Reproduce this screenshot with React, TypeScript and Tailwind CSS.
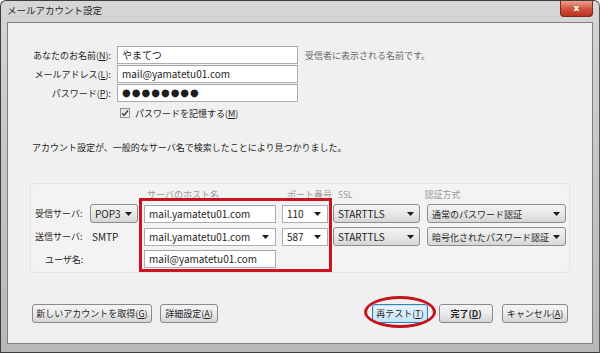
import React from 'react'

const JP = "font-['Noto_Sans_CJK_JP',sans-serif]"

function Arrow() {
  return (
    <svg width="7" height="4" viewBox="0 0 7 4" className="shrink-0">
      <path d="M0 0 L7 0 L3.5 4 Z" fill="#1b1b1b" />
    </svg>
  )
}

function TextBox({ w, children }: { w: string; children?: React.ReactNode }) {
  return (
    <div
      className={`${w} h-[18px] bg-white border border-[#abadb3] border-t-[#a0a2a8] flex items-center px-[4px] text-[10px] text-[#1e1e1e] leading-none`}
    >
      {children}
    </div>
  )
}

function Select({ w, children }: { w: string; children: React.ReactNode }) {
  return (
    <div
      className={`${w} h-[19px] rounded-[3px] border border-[#8d8d8d] bg-gradient-to-b from-[#f4f4f4] via-[#e8e8e8] to-[#d6d6d6] flex items-center justify-between pl-[4px] pr-[5px] text-[10px] text-[#1e1e1e] leading-none`}
    >
      <span className="whitespace-nowrap">{children}</span>
      <Arrow />
    </div>
  )
}

function Combo({ w, children }: { w: string; children: React.ReactNode }) {
  return (
    <div
      className={`${w} h-[18px] bg-white border border-[#abadb3] flex items-center justify-between pl-[4px] pr-[6px] text-[10px] text-[#1e1e1e] leading-none`}
    >
      <span className="whitespace-nowrap">{children}</span>
      <Arrow />
    </div>
  )
}

function Btn({
  w,
  children,
  bold,
  focus,
}: {
  w: string
  children: React.ReactNode
  bold?: boolean
  focus?: boolean
}) {
  return (
    <div
      className={`${w} h-[19px] rounded-[3px] border flex items-center justify-center text-[9px] leading-none text-[#1e1e1e] whitespace-nowrap ${
        focus
          ? 'border-[#3c7fb1] bg-gradient-to-b from-[#eaf6fd] to-[#c4e5f6] shadow-[inset_0_0_0_1px_#bfe3f7]'
          : 'border-[#8a8a8a] bg-gradient-to-b from-[#f4f4f4] via-[#ebebeb] to-[#d4d4d4]'
      } ${bold ? 'font-bold' : ''}`}
    >
      {children}
    </div>
  )
}

export default function App() {
  return (
    <div className={`w-[600px] h-[353px] ${JP} bg-white`}>
      <div className="w-[600px] h-[353px] rounded-t-[6px] border border-[#3d3d3d] border-r-[#5a5a5a] bg-gradient-to-b from-[#d6d6d6] via-[#c4c4c4] to-[#b8b8b8] flex flex-col">
        {/* title bar */}
        <div className="h-[21px] flex items-start justify-between">
          <span className="ml-[6px] mt-[5px] text-[9.5px] leading-none text-[#2a2a2a]">
            メールアカウント設定
          </span>
          <div className="mr-[6px] w-[33px] h-[16px] rounded-b-[4px] border border-t-0 border-[#7c2a1f] bg-gradient-to-b from-[#e9a08e] via-[#d2563f] to-[#b9301f] flex items-center justify-center text-white text-[9px] font-bold leading-none font-['DejaVu_Sans',sans-serif]">
            x
          </div>
        </div>

        {/* client area */}
        <div className="mx-[6px] h-[322px] border border-[#7f7f7f] bg-[#f0f0f0] flex flex-col">
          <div className="mt-[23px] flex flex-col gap-[1px]">
            <div className="flex items-center h-[18px]">
              <span className="w-[103px] text-right text-[9px] leading-none text-[#1e1e1e]">
                あなたのお名前(<u>N</u>):
              </span>
              <div className="ml-[6px]">
                <TextBox w="w-[181px]">やまてつ</TextBox>
              </div>
              <span className="ml-[7px] text-[9px] leading-none text-[#6a6a6a]">
                受信者に表示される名前です。
              </span>
            </div>
            <div className="flex items-center h-[18px]">
              <span className="w-[103px] text-right text-[9px] leading-none text-[#1e1e1e]">
                メールアドレス(<u>L</u>):
              </span>
              <div className="ml-[6px]">
                <TextBox w="w-[181px]">mail@yamatetu01.com</TextBox>
              </div>
            </div>
            <div className="flex items-center h-[18px]">
              <span className="w-[103px] text-right text-[9px] leading-none text-[#1e1e1e]">
                パスワード(<u>P</u>):
              </span>
              <div className="ml-[6px]">
                <TextBox w="w-[181px]">
                  <span className="text-[10px] tracking-[1px] font-['DejaVu_Sans',sans-serif]">
                    ●●●●●●●●
                  </span>
                </TextBox>
              </div>
            </div>
          </div>

          <div className="mt-[4px] h-[14px] flex items-center pl-[112px]">
            <div className="w-[10px] h-[10px] border border-[#8f8f8f] bg-gradient-to-b from-[#e4e4e4] to-[#f8f8f8] flex items-center justify-center">
              <svg width="8" height="8" viewBox="0 0 8 8">
                <path d="M1 4.2 L3 6.3 L7 1.5" stroke="#3c4a60" strokeWidth="1.5" fill="none" />
              </svg>
            </div>
            <span className="ml-[5px] text-[9px] leading-none text-[#1e1e1e]">
              パスワードを記憶する(<u>M</u>)
            </span>
          </div>

          <div className="mt-[20px] h-[14px] flex items-center pl-[24px] text-[9px] leading-none text-[#1e1e1e]">
            アカウント設定が、一般的なサーバ名で検索したことにより見つかりました。
          </div>

          {/* server group */}
          <div className="relative mt-[29px] ml-[22px] w-[540px] h-[90px] rounded-[3px] border border-[#e2e2e2] bg-[#f3f3f3] flex flex-col">
            <div className="h-[14px] mt-[3px] flex items-center text-[9px] leading-none text-[#9a9a9a]">
              <span className="ml-[116px]">サーバのホスト名</span>
              <span className="ml-[68px]">ポート番号</span>
              <span className="ml-[6px] font-['Noto_Sans',sans-serif]">SSL</span>
              <span className="ml-[72px]">認証方式</span>
            </div>
            <div className="mt-[3px] flex items-center h-[19px]">
              <span className="w-[59px] pl-[4px] text-[9px] leading-none text-[#1e1e1e]">受信サーバ:</span>
              <Select w="w-[48px]">POP3</Select>
              <div className="ml-[6px]">
                <TextBox w="w-[132px]">mail.yamatetu01.com</TextBox>
              </div>
              <div className="ml-[6px]">
                <Combo w="w-[46px]">110</Combo>
              </div>
              <div className="ml-[5px]">
                <Select w="w-[87px]">STARTTLS</Select>
              </div>
              <div className="ml-[7px]">
                <Select w="w-[139px]">
                  <span className="text-[9px]">通常のパスワード認証</span>
                </Select>
              </div>
            </div>
            <div className="mt-[4px] flex items-center h-[19px]">
              <span className="w-[61px] pl-[4px] text-[9px] leading-none text-[#1e1e1e]">送信サーバ:</span>
              <span className="w-[52px] text-[10px] leading-none text-[#1e1e1e]">SMTP</span>
              <Combo w="w-[132px]">mail.yamatetu01.com</Combo>
              <div className="ml-[6px]">
                <Combo w="w-[46px]">587</Combo>
              </div>
              <div className="ml-[5px]">
                <Select w="w-[87px]">STARTTLS</Select>
              </div>
              <div className="ml-[7px]">
                <Select w="w-[139px]">
                  <span className="text-[9px]">暗号化されたパスワード認証</span>
                </Select>
              </div>
            </div>
            <div className="mt-[4px] flex items-center h-[18px]">
              <span className="w-[113px] pl-[14px] text-[9px] leading-none text-[#1e1e1e]">ユーザ名:</span>
              <TextBox w="w-[132px]">mail@yamatetu01.com</TextBox>
            </div>
            {/* red annotation */}
            <div className="absolute left-[108px] top-[14px] w-[193px] h-[74px] border-[3px] border-[#cc1420]" />
          </div>

          {/* buttons */}
          <div className="mt-[31px] flex items-center pl-[24px] pr-[24px]">
            <Btn w="w-[120px]">新しいアカウントを取得(<u>G</u>)</Btn>
            <div className="ml-[8px]">
              <Btn w="w-[58px]">詳細設定(<u>A</u>)</Btn>
            </div>
            <div className="flex-1" />
            <div className="relative">
              <Btn w="w-[56px]" focus>
                再テスト(<u>T</u>)
              </Btn>
              <div className="absolute left-[-8px] top-[-8px] w-[72px] h-[32px] rounded-[50%] border-[3px] border-[#c3141e]" />
            </div>
            <div className="ml-[11px]">
              <Btn w="w-[54px]" bold>
                完了(<u>D</u>)
              </Btn>
            </div>
            <div className="ml-[9px]">
              <Btn w="w-[66px]">キャンセル(<u>A</u>)</Btn>
            </div>
          </div>
        </div>
      </div>
    </div>
  )
}
